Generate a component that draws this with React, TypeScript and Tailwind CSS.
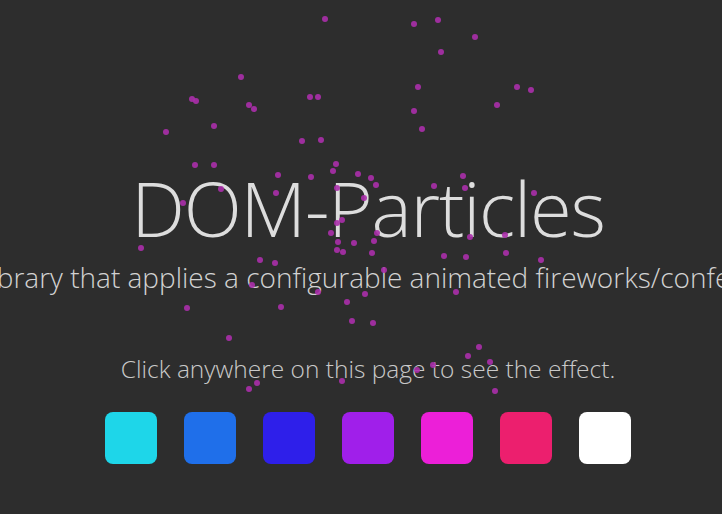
import React from "react";

const SWATCHES = ["#1ed6e9", "#1f6fea", "#2e1fea", "#a01fea", "#ec1fd8", "#ec1f6e", "#ffffff"];

// particle positions left over from the last burst
const PARTICLES: [number, number][] = [
  [325, 19], [414, 24], [438, 20], [475, 37], [441, 52], [241, 77], [418, 87],
  [517, 87], [531, 90], [192, 99], [196, 101], [249, 105], [254, 109], [310, 97],
  [318, 97], [497, 105], [414, 111], [422, 129], [214, 126], [166, 132], [302, 141],
  [321, 140], [195, 165], [214, 165], [336, 164], [333, 171], [278, 175], [311, 177],
  [358, 174], [371, 178], [463, 176], [434, 186], [465, 188], [221, 189], [183, 203],
  [276, 193], [337, 188], [376, 185], [534, 193], [364, 198], [342, 220], [337, 223],
  [331, 233], [338, 242], [354, 243], [374, 241], [343, 252], [337, 250], [372, 253],
  [377, 233], [470, 237], [505, 235], [141, 248], [444, 256], [466, 257], [506, 253],
  [541, 260], [260, 260], [275, 263], [384, 270], [252, 285], [318, 292], [365, 294],
  [456, 292], [347, 302], [187, 308], [281, 307], [352, 321], [373, 323], [229, 338],
  [479, 347], [468, 356], [490, 362], [433, 365], [417, 370], [257, 383], [249, 389],
  [342, 381], [495, 391],
];

function Particles() {
  return (
    <div className="pointer-events-none absolute inset-0">
      {PARTICLES.map(([x, y], i) => (
        <span
          key={i}
          className="absolute h-[6px] w-[6px] rounded-full bg-[#ab2fab] opacity-90"
          style={{ left: x - 3, top: y - 3 }}
        />
      ))}
    </div>
  );
}

export default function App() {
  return (
    <div
      className="relative h-[514px] w-full overflow-hidden bg-[#2d2d2d]"
      style={{ fontFamily: '"Open Sans", "Noto Sans", sans-serif' }}
    >
      <div className="flex flex-col items-center pl-[14px] pt-[170px]">
        <h1 className="text-[76px] font-light leading-none tracking-[-1.2px] text-[#dddddd]">
          DOM-Particles
        </h1>
      </div>
      <p className="-ml-[40px] mt-[17px] whitespace-nowrap text-[28px] font-light leading-none text-[#d2d2d2]">
        A library that applies a configurable animated fireworks/confetti effect to DOM elements.
      </p>
      <div className="flex flex-col items-center pl-[14px]">
        <p className="mt-[66px] text-[24.5px] font-light leading-none text-[#c9c9c9]">
          Click anywhere on this page to see the effect.
        </p>
        <div className="mt-[30px] flex gap-[27px]">
          {SWATCHES.map((c) => (
            <div key={c} className="h-[52px] w-[52px] rounded-[8px]" style={{ backgroundColor: c }} />
          ))}
        </div>
      </div>
      <Particles />
    </div>
  );
}
